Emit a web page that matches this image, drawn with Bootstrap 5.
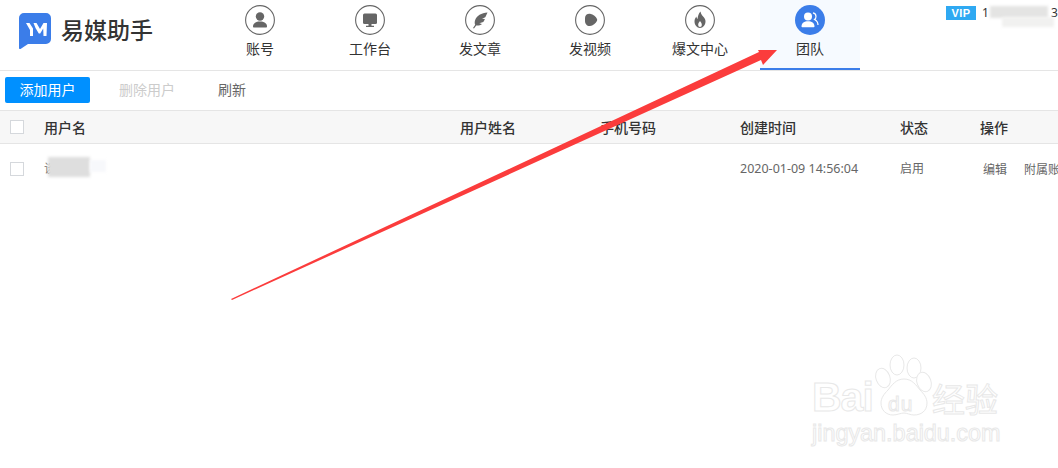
<!DOCTYPE html>
<html lang="zh">
<head>
    <meta charset="UTF-8">
    <title>易媒助手 - 团队</title>
    <link href="https://cdn.jsdelivr.net/npm/bootstrap@5.3.0/dist/css/bootstrap.min.css" rel="stylesheet">
    <style>
        html, body { height: 468px; overflow: hidden; }
        body { background: #fff; color: #333; font-family: "Noto Sans", "Noto Sans CJK SC", sans-serif; font-size: 14px; position: relative; }

        /* 顶部 */
        .top-head { height: 71px; border-bottom: 1px solid #e5e5e5; }
        .brand-area { width: 205px; padding: 13px 0 0 19px; }
        .brand-name { font-size: 23px; font-weight: 500; line-height: 32px; color: #333; margin-left: 10px; margin-top: 1px; }
        .nav-cell { width: 100px; margin: 0 5px; height: 70px; padding-top: 5px; color: #333; line-height: 20px; border-bottom: 2px solid transparent; }
        .nav-cell svg { display: block; margin-bottom: 4px; }
        .nav-cell.is-on { background: #f6faff; border-bottom-color: #3b7de9; }
        .vip-area { position: absolute; left: 946px; top: 6px; width: 112px; height: 24px; font-size: 12px; line-height: 14px; }
        .vip-tag { background: #2fa9f2; color: #fff; font: bold 11px/14px "Liberation Sans", sans-serif; width: 30px; height: 14px; letter-spacing: .5px; text-align: center; }
        .vip-first { position: absolute; left: 36px; top: 0; }
        .vip-last { position: absolute; left: 105px; top: 0; }
        .blur-patch { position: absolute; filter: blur(1.500px); }
        .vip-blur-a { left: 44px; top: 0; width: 58px; height: 12px; background: #e4e4e3; }
        .vip-blur-b { left: 56px; top: 11px; width: 52px; height: 10px; background: #f1f1f0; }

        /* 工具栏 */
        .tool-bar { height: 39px; padding: 6px 0 0 5px; }
        .add-btn { background: #0090ff; color: #fff; border: 0; width: 85px; height: 26px; border-radius: 2px; font-size: 14px; line-height: 26px; padding: 0; }
        .tool-link { line-height: 26px; }
        .link-off { margin-left: 29px; color: #ccc; }
        .link-fresh { margin-left: 43px; color: #666; }

        /* 表格 */
        .user-head, .user-row { display: grid; grid-template-columns: 44px 416px 140px 140px 160px 80px 1fr; align-items: center; }
        .user-head { height: 34px; background: #f7f7f7; border-top: 1px solid #e5e5e5; border-bottom: 1px solid #e5e5e5; font-weight: 500; color: #333; font-size: 14px; }
        .user-row { height: 50px; font-size: 12px; color: #666; }
        .check-box { width: 14px; height: 14px; margin-left: 10px; border: 1px solid #d5d8dc; background: #fff; }
        .date-cell { font-size: 12.5px; }
        .op-cell { white-space: nowrap; overflow: hidden; padding-left: 3px; padding-top: 2px; }
        .op-cell span + span { margin-left: 17px; }
        .name-cell { height: 18px; line-height: 18px; }
        .name-blur-a { left: 4px; top: -3px; width: 42px; height: 20px; background: #dedede; }
        .name-blur-b { left: 46px; top: 0; width: 16px; height: 12px; background: #f7f8fb; }

        /* 箭头 */
        .mark-arrow { position: absolute; left: 0; top: 0; pointer-events: none; }

        /* 水印 */
        .water-mark { position: absolute; left: 810px; top: 352px; width: 200px; height: 96px; color: #fff; font-family: "Liberation Sans", sans-serif; -webkit-text-stroke: 1px #e8e8e8; white-space: nowrap; }
        .water-mark svg { position: absolute; left: 0; top: 0; }
        .water-mark div { position: absolute; }
        .wm-big { left: 2px; top: 21px; font-size: 41px; line-height: 48px; font-weight: bold; letter-spacing: -1px; }
        .wm-du { left: 78px; top: 40px; font-size: 21px; line-height: 24px; letter-spacing: 1px; }
        .wm-jy { left: 122px; top: 27px; font-size: 33px; line-height: 38px; font-family: "Noto Sans CJK SC", sans-serif; }
        .wm-url { left: 2px; top: 67px; font-size: 23.400px; line-height: 28px; }
    </style>
</head>
<body>
    <!-- 顶部导航 -->
    <header class="top-head d-flex">
        <div class="brand-area d-flex align-items-start">
            <svg width="32" height="36" viewBox="0 0 32 36">
                <path d="M5 0H27a5 5 0 0 1 5 5V26a5 5 0 0 1-5 5H9L1.500 36A1 1 0 0 1 0 35V5a5 5 0 0 1 5-5z" fill="#3b7de9"/>
                <path d="M7 10h3.500l3.500 5.500V23h-3v-6zM14.500 10h3l3.500 6 3.500-6h3.500l-.5 13h-3l-.3-7.500-3 5h-1.400l-3.300-5.500z" fill="#fff"/>
            </svg>
            <div class="brand-name">易媒助手</div>
        </div>

        <div class="nav-cell d-flex flex-column align-items-center">
            <svg width="30" height="30" viewBox="0 0 30 30"><circle cx="15" cy="15" r="14.400" fill="#fff" stroke="#666" stroke-width="1.100"/><circle cx="15" cy="11.500" r="4.200" fill="#666"/><path d="M8 21.500c0-3.500 3-5 7-5s7 1.500 7 5c0 .6-.4 1-1 1H9c-.6 0-1-.4-1-1z" fill="#666"/></svg>
            <span>账号</span>
        </div>
        <div class="nav-cell d-flex flex-column align-items-center">
            <svg width="30" height="30" viewBox="0 0 30 30"><circle cx="15" cy="15" r="14.400" fill="#fff" stroke="#666" stroke-width="1.100"/><rect x="8" y="8.500" width="14" height="10.500" rx="1.500" fill="#666"/><path d="M13.500 19h3v1.800h2.500v1.200h-8v-1.200h2.500z" fill="#666"/></svg>
            <span>工作台</span>
        </div>
        <div class="nav-cell d-flex flex-column align-items-center">
            <svg width="30" height="30" viewBox="0 0 30 30"><circle cx="15" cy="15" r="14.400" fill="#fff" stroke="#666" stroke-width="1.100"/><path d="M22.500 7.500c-6 .5-11 3-12.500 8-.5 1.800-.3 3.400.2 4.300L8 23l1 .5 2.200-3c2 .4 4.200-.2 5.800-1.600l-2.700-.6 4-1.300c.7-.9 1.200-1.900 1.600-3l-2.900-.3 3.300-1.500c.7-1.600 1.400-3 2.200-4.700z" fill="#666"/></svg>
            <span>发文章</span>
        </div>
        <div class="nav-cell d-flex flex-column align-items-center">
            <svg width="30" height="30" viewBox="0 0 30 30"><circle cx="15" cy="15" r="14.400" fill="#fff" stroke="#666" stroke-width="1.100"/><path d="M10 13c0-3 2.500-4.500 5-4.200 3.500.5 6 3 7 5.200.3.700.3 1.400-.1 2-1.200 2.200-3.900 4.800-6.900 5-3 .2-5-2-5-5z" fill="#666"/></svg>
            <span>发视频</span>
        </div>
        <div class="nav-cell d-flex flex-column align-items-center">
            <svg width="30" height="30" viewBox="0 0 30 30"><circle cx="15" cy="15" r="14.400" fill="#fff" stroke="#666" stroke-width="1.100"/><path d="M15.500 6.500c.5 3 2 4 3.500 6 1 1.300 1.500 2.500 1.500 4 0 3.500-2.500 6.500-5.500 6.500s-5.500-3-5.500-6.500c0-2 .8-3.500 1.800-5 .2 1.200.6 2 1.300 2.500.2-3 1-5.500 2.900-7.500zM15 16c-1 1.200-1.800 2.300-1.800 3.700 0 1.300.8 2.300 1.800 2.300s1.800-1 1.800-2.300c0-1.400-.8-2.500-1.800-3.700z" fill="#666" fill-rule="evenodd"/></svg>
            <span>爆文中心</span>
        </div>
        <div class="nav-cell is-on d-flex flex-column align-items-center">
            <svg width="30" height="30" viewBox="0 0 30 30"><circle cx="15" cy="15" r="15" fill="#3b7de9"/><circle cx="13" cy="11.500" r="4" fill="#fff"/><path d="M6.500 21.500c0-3.500 2.800-5.200 6.500-5.200s6.500 1.700 6.500 5.200c0 .5-.3.800-.8.800H7.300c-.5 0-.8-.3-.8-.8z" fill="#fff"/><path d="M18 7.800c2 .3 3 1.800 3 3.600 0 1.400-.6 2.400-1.500 3.100 2 1 3.500 2.800 3.500 5.500" fill="none" stroke="#fff" stroke-width="1.200"/></svg>
            <span>团队</span>
        </div>

        <div class="vip-area">
            <div class="vip-tag">VIP</div>
            <span class="vip-first">1</span>
            <span class="vip-last">3</span>
            <span class="blur-patch vip-blur-a"></span>
            <span class="blur-patch vip-blur-b"></span>
        </div>
    </header>

    <!-- 操作按钮 -->
    <div class="tool-bar d-flex align-items-start">
        <button type="button" class="add-btn">添加用户</button>
        <span class="tool-link link-off">删除用户</span>
        <span class="tool-link link-fresh">刷新</span>
    </div>

    <!-- 用户列表 -->
    <div class="user-head">
        <div><div class="check-box"></div></div>
        <div>用户名</div>
        <div>用户姓名</div>
        <div>手机号码</div>
        <div>创建时间</div>
        <div>状态</div>
        <div>操作</div>
    </div>
    <div class="user-row">
        <div><div class="check-box"></div></div>
        <div class="name-cell position-relative">
            <span>谈</span>
            <span class="blur-patch name-blur-a"></span>
            <span class="blur-patch name-blur-b"></span>
        </div>
        <div></div>
        <div></div>
        <div class="date-cell">2020-01-09 14:56:04</div>
        <div>启用</div>
        <div class="op-cell"><span>编辑</span><span>附属账号</span></div>
    </div>

    <!-- 红色箭头 -->
    <svg class="mark-arrow" width="1058" height="468" viewBox="0 0 1058 468">
        <path d="M231 299L759 52 758 50 777 50 763 65 761 60 232 300z" fill="#fb3c3c"/>
    </svg>

    <!-- 水印 -->
    <div class="water-mark">
        <svg width="200" height="96" viewBox="0 0 200 96" fill="#fff" stroke="#e8e8e8" stroke-width="1">
            <ellipse cx="73" cy="26" rx="7" ry="10" transform="rotate(-20 73 26)"/>
            <ellipse cx="87" cy="13" rx="7" ry="10"/>
            <ellipse cx="104" cy="16" rx="7" ry="10"/>
            <ellipse cx="114" cy="30" rx="7" ry="10" transform="rotate(-20 114 30)"/>
            <path d="M94 27c8 0 12 6 16 11 4 4 7 8 7 13 0 8-6 12-13 12-4 0-7-2-10-2s-7 2-11 2c-7 0-12-5-12-12 0-5 3-9 7-13 4-5 8-11 16-11z"/>
        </svg>
        <div class="wm-big">Bai</div>
        <div class="wm-du">du</div>
        <div class="wm-jy">经验</div>
        <div class="wm-url">jingyan.baidu.com</div>
    </div>

    <script src="https://cdn.jsdelivr.net/npm/bootstrap@5.3.0/dist/js/bootstrap.bundle.min.js"></script>
</body>
</html>
